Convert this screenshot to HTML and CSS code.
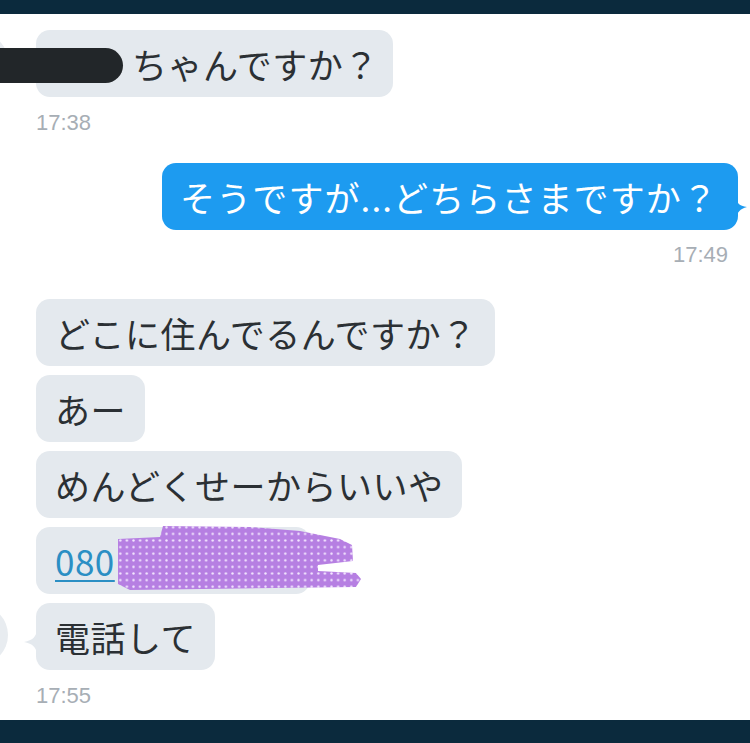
FILE: index.html
```html
<!DOCTYPE html>
<html lang="ja">
<head>
<meta charset="utf-8">
<title>DM</title>
<link rel="stylesheet" href="styles.css">
</head>
<body>
<div class="screen">
  <div class="bar"></div>
  <div class="chat">
    <div class="row in">
      <div class="bubble gray first">
        <span class="avatar av1"></span>
        <span class="redact"></span>
        ちゃんですか？
      </div>
    </div>
    <div class="ts ts1">17:38</div>

    <div class="row out">
      <div class="bubble blue">
        そうですが...どちらさまですか？
        <svg class="tail-r" width="12" height="22" viewBox="0 0 12 22"><path d="M0 0 C1 6 3 9 11 10 C4 12 1 15 0 22 Z" fill="#1d9bf0"/></svg>
      </div>
    </div>
    <div class="ts ts2">17:49</div>

    <div class="group">
      <div class="row in"><div class="bubble gray">どこに住んでるんですか？</div></div>
      <div class="row in"><div class="bubble gray">あー</div></div>
      <div class="row in"><div class="bubble gray">めんどくせーからいいや</div></div>
      <div class="row in">
        <div class="bubble gray phone">
          <span class="link">080</span>
          <svg class="scribble" width="250" height="70" viewBox="0 0 250 70">
            <defs>
              <pattern id="dots" width="6.6" height="6.6" patternUnits="userSpaceOnUse">
                <rect width="6.6" height="6.6" fill="#b67fe2"/>
                <circle cx="3.3" cy="3.3" r="1.2" fill="#f3e6ff"/>
              </pattern>
            </defs>
            <path d="M1 15 L43 13 L46 2 L133 3 L183 7 L223 15 L235 21 L236 37 L201 41 L201 47 L239 49 L244 55 L239 63 L13 66 L1 60 Z" fill="url(#dots)"/>
          </svg>
        </div>
      </div>
      <div class="row in">
        <div class="bubble gray">
          <span class="avatar av2"></span>
          <svg class="tail-l" width="14" height="24" viewBox="0 0 14 24"><path d="M14 0 C13 7 10 10 1 12 C10 14 13 17 14 24 Z" fill="#e4e9ee"/></svg>
          電話して
        </div>
      </div>
    </div>
    <div class="ts ts3">17:55</div>
  </div>
  <div class="bar bottom"></div>
</div>
</body>
</html>
```
FILE: styles.css
```css
* { box-sizing: border-box; }
html, body { margin: 0; padding: 0; background: #ffffff; }
.screen {
  width: 750px;
  height: 743px;
  display: flex;
  flex-direction: column;
  overflow: hidden;
  background: #ffffff;
}
.bar { height: 14px; background: #0b2a3d; flex: none; }
.bar.bottom { height: 23px; }
.chat {
  flex: 1;
  padding: 16px 12px 0 36px;
  display: flex;
  flex-direction: column;
  overflow: hidden;
}
.row { display: flex; }
.row.out { justify-content: flex-end; }
.bubble {
  position: relative;
  height: 67px;
  padding: 0 19px;
  font-family: "Noto Sans CJK JP", sans-serif;
  font-size: 35px;
  letter-spacing: 0.5px;
  line-height: 67px;
  color: #2b3034;
  border-radius: 14px;
  white-space: nowrap;
}
.bubble.gray { background: #e4e9ee; }
.bubble.blue { background: #1d9bf0; color: #ffffff; padding: 0 20px 0 18px; letter-spacing: 1.1px; }
.bubble.first { padding-left: 96px; padding-right: 14px; }
.redact {
  position: absolute;
  left: -36px;
  top: 18px;
  width: 123px;
  height: 35px;
  background: #222629;
  border-radius: 0 18px 18px 0;
}
.avatar {
  position: absolute;
  width: 60px;
  height: 60px;
  border-radius: 50%;
  background: #e8ecf0;
}
.av1 { left: -88px; top: 2px; }
.av2 { left: -88px; top: 2px; }
.tail-r { position: absolute; right: -10px; top: 34px; }
.tail-l { position: absolute; left: -13px; top: 27px; }
.ts {
  font-family: "Liberation Sans", Arial, sans-serif;
  font-size: 22px;
  line-height: 22px;
  color: #a7aeb5;
}
.ts1 { margin-top: 15px; }
.ts2 { margin-top: 14px; align-self: flex-end; margin-right: 10px; }
.ts3 { margin-top: 15px; }
.row.out { margin-top: 29px; }
.group {
  margin-top: 33px;
  display: flex;
  flex-direction: column;
  gap: 9px;
}
.link {
  color: #2b8fc4;
  text-decoration: underline;
  text-decoration-thickness: 2px;
  text-underline-offset: 4px;
}
.bubble.phone { width: 274px; }
.scribble { position: absolute; left: 81px; top: -3px; }
```
